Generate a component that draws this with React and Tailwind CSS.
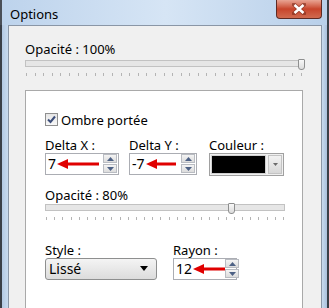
import React from "react";

const font = { fontFamily: '"Noto Sans", "Open Sans", sans-serif' };

function Arrow({ width }) {
  return (
    <svg width={width} height="10" viewBox={`0 0 ${width} 10`} className="block">
      <polygon points={`0,5 11,0 11,10`} fill="#e00000" />
      <rect x="10" y="3.5" width={width - 10} height="3" fill="#e00000" />
    </svg>
  );
}

function SpinButtons() {
  return (
    <div className="flex flex-col gap-[1px] mr-[1px]">
      {[0, 1].map((i) => (
        <div
          key={i}
          className="w-[14px] h-[9px] border border-[#b9bcc2] bg-gradient-to-b from-[#f4f4f4] to-[#dcdcdc] flex items-center justify-center"
        >
          <svg width="7" height="4" viewBox="0 0 7 4">
            {i === 0 ? (
              <polygon points="0,4 3.5,0 7,4" fill="#4d6185" />
            ) : (
              <polygon points="0,0 3.5,4 7,0" fill="#4d6185" />
            )}
          </svg>
        </div>
      ))}
    </div>
  );
}

function Spinner({ value, width, arrow }) {
  return (
    <div
      className="h-[22px] border border-[#abadb3] bg-white flex items-center"
      style={{ width }}
    >
      <span className="text-[14px] text-black pl-[2px] leading-none">{value}</span>
      <div className="flex-1 flex items-center pl-[1px]">
        <Arrow width={arrow} />
      </div>
      <SpinButtons />
    </div>
  );
}

function Ticks({ count }) {
  return (
    <div className="flex justify-between h-[4px]">
      {Array.from({ length: count }).map((_, i) => (
        <div key={i} className="w-[1px] h-[3px] bg-[#b4b4b4]" />
      ))}
    </div>
  );
}

function Slider({ width, thumb, ticks }) {
  return (
    <div style={{ width }}>
      <div className="relative h-[7px] border border-[#c2c2c2] bg-[#e6e6e6]">
        <div
          className="absolute top-[-2px] w-[7px] h-[11px] border border-[#8e8f8f] bg-gradient-to-b from-[#f8f8f8] to-[#dcdcdc] rounded-b-[3px] rounded-t-[1px]"
          style={{ left: thumb }}
        />
      </div>
      <div className="mt-[6px] px-[1px]">
        <Ticks count={ticks} />
      </div>
    </div>
  );
}

export default function App() {
  return (
    <div
      className="w-[329px] h-[308px] overflow-hidden flex flex-col bg-[#c4d7ed] text-[13px] text-black"
      style={font}
    >
      {/* Title bar */}
      <div className="h-[28px] flex items-start bg-gradient-to-r from-[#bdd3ec] via-[#d6e5f5] to-[#b8cfe9] border-l-2 border-[#4a4f57] relative">
        <span className="mt-[5px] ml-[8px] text-[13px] text-black">Options</span>
        <div className="flex-1" />
        <div className="w-[46px] h-[19px] mr-[7px] rounded-b-[4px] border border-t-0 border-[#5e2a23] bg-gradient-to-b from-[#e8a493] via-[#c7442b] to-[#d06a4f] flex items-center justify-center">
          <svg width="14" height="12" viewBox="0 0 14 12">
            <path d="M2 1.5 L12 10.5 M12 1.5 L2 10.5" stroke="#7a2a1a" strokeWidth="4.2" strokeLinecap="square" opacity="0.6" />
            <path d="M2.5 2 L11.5 10 M11.5 2 L2.5 10" stroke="#ffffff" strokeWidth="2.6" />
          </svg>
        </div>
        <div className="absolute right-0 top-0 w-[2px] h-full bg-[#3a3f47]" />
      </div>

      {/* Body */}
      <div className="flex-1 flex">
        <div className="w-[8px] flex">
          <div className="w-[2px] bg-[#3a3f47]" />
          <div className="flex-1 bg-gradient-to-r from-[#b3c9e3] to-[#c8daee]" />
        </div>
        <div className="flex-1 bg-[#f0f0f0] border-t border-l border-r border-[#8a96a6] pl-[16px] pr-[18px]">
          <div className="pt-[15px] leading-[16px]">Opacité : 100%</div>
          <div className="mt-[3px]">
            <Slider width="278px" thumb="272px" ticks={33} />
          </div>
          <div className="mt-[13px] bg-white border border-[#a9a9a9] border-b-0 h-[220px] pl-[19px]">
            <div className="mt-[21px] flex items-center">
              <div className="w-[13px] h-[13px] border border-[#8f8f8f] bg-gradient-to-b from-[#e6e6e6] to-[#f8f8f8] flex items-center justify-center">
                <svg width="9" height="9" viewBox="0 0 9 9">
                  <path d="M1 4.5 L3.5 7 L8 1.5" stroke="#3c4e7a" strokeWidth="2" fill="none" />
                </svg>
              </div>
              <span className="ml-[3px] leading-[16px]">Ombre portée</span>
            </div>

            <div className="mt-[10px] flex">
              <div className="w-[84px]">
                <div className="leading-[15px]">Delta X :</div>
                <Spinner value="7" width="74px" arrow={42} />
              </div>
              <div className="w-[80px]">
                <div className="leading-[15px]">Delta Y :</div>
                <Spinner value="-7" width="68px" arrow={30} />
              </div>
              <div>
                <div className="leading-[15px]">Couleur :</div>
                <div className="w-[75px] h-[23px] border border-[#a0a0a0] bg-[#f0f0f0] p-[1px] flex items-center gap-[2px]">
                  <div className="w-[55px] h-[19px] bg-black border border-[#d0d0d0]" />
                  <div className="w-[14px] h-[19px] border border-[#c4c4c4] bg-gradient-to-b from-[#f2f2f2] to-[#d8d8d8] flex items-center justify-center">
                    <svg width="5" height="3" viewBox="0 0 5 3">
                      <polygon points="0,0 5,0 2.5,3" fill="#6a6a6a" />
                    </svg>
                  </div>
                </div>
              </div>
            </div>

            <div className="mt-[11px] leading-[16px]">Opacité : 80%</div>
            <div className="mt-[1px]">
              <Slider width="240px" thumb="182px" ticks={30} />
            </div>

            <div className="mt-[22px] flex">
              <div className="w-[128px]">
                <div className="leading-[15px]">Style :</div>
                <div className="w-[112px] h-[22px] border border-[#8e8f8f] rounded-[3px] bg-gradient-to-b from-[#f4f4f4] to-[#dcdcdc] flex items-center pl-[3px] pr-[8px]">
                  <span className="text-[14px] flex-1">Lissé</span>
                  <svg width="8" height="5" viewBox="0 0 8 5">
                    <polygon points="0,0 8,0 4,5" fill="#000" />
                  </svg>
                </div>
              </div>
              <div>
                <div className="leading-[15px]">Rayon :</div>
                <Spinner value="12" width="64px" arrow={32} />
              </div>
            </div>
          </div>
        </div>
        <div className="w-[7px] flex">
          <div className="flex-1 bg-gradient-to-r from-[#c8daee] to-[#a9c0dc]" />
          <div className="w-[2px] bg-[#3a3f47]" />
        </div>
      </div>
    </div>
  );
}
